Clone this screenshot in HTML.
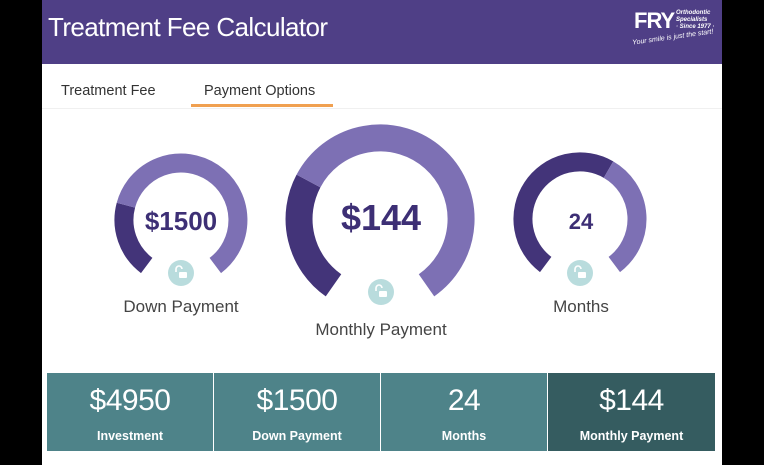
<!DOCTYPE html>
<html><head><meta charset="utf-8"><style>
*{margin:0;padding:0;box-sizing:border-box}
body{width:764px;height:465px;background:#000;position:relative;overflow:hidden;font-family:"Liberation Sans",sans-serif}
#w{position:absolute;left:42px;top:0;width:680px;height:465px;background:#fff}
#h{position:absolute;left:0;top:0;width:680px;height:64px;background:#4f3f86}
#h .t{position:absolute;left:6px;top:12px;color:#fff;font-size:26px;font-weight:300;letter-spacing:-0.6px}
.tab{position:absolute;top:83px;font-size:14.5px;color:#333}
#ul{position:absolute;left:149px;top:104px;width:142px;height:3px;background:#f0a050}
#ln{position:absolute;left:0;top:108px;width:680px;height:1px;background:#f0f0f0}
.lbl{position:absolute;font-size:17px;color:#444;text-align:center;width:200px}
.box{position:absolute;top:373px;height:78px;width:166px;background:#4e8389;color:#fff;text-align:center}
.box .n{font-size:30px;font-weight:300;margin-top:9px;line-height:38px;letter-spacing:-0.5px}
.box .l{font-size:12.5px;font-weight:bold;margin-top:9px}
</style></head><body>
<div id="w">
<div id="h"><div class="t">Treatment Fee Calculator</div>
<div style="position:absolute;left:592px;top:8px;color:#fff;font-weight:bold;font-size:22px;letter-spacing:-1px">FRY</div>
<div style="position:absolute;left:634px;top:10px;color:#fff;font-size:6px;line-height:7px;font-weight:bold;font-style:italic">Orthodontic<br>Specialists<br>· Since 1977 ·</div>
<div style="position:absolute;left:590px;top:34px;color:#fff;font-size:7px;font-style:italic;transform:rotate(-8deg)">Your smile is just the start!</div>
</div>
<div class="tab" style="left:19px">Treatment Fee</div>
<div class="tab" style="left:162px">Payment Options</div>
<div id="ul"></div><div id="ln"></div>
</div>
<svg style="position:absolute;left:0;top:0" width="764" height="465">
<g fill="none">
<path d="M146.7 265.5 A57 57 0 0 1 125.9 205.2" stroke="#433479" stroke-width="19"/>
<path d="M125.9 205.2 A57 57 0 1 1 215.3 265.5" stroke="#7d70b4" stroke-width="19"/>
<path d="M333.5 285.3 A81 81 0 0 1 308.5 181" stroke="#433479" stroke-width="27"/>
<path d="M308.5 181 A81 81 0 1 1 426.5 285.3" stroke="#7d70b4" stroke-width="27"/>
<path d="M545.7 264.5 A57 57 0 0 1 608.5 169.6" stroke="#433479" stroke-width="19"/>
<path d="M608.5 169.6 A57 57 0 0 1 614.3 264.5" stroke="#7d70b4" stroke-width="19"/>
</g>
<g>
<circle cx="181" cy="273" r="13" fill="#b9dcdd"/>
<circle cx="381" cy="292" r="13" fill="#b9dcdd"/>
<circle cx="580" cy="273" r="13" fill="#b9dcdd"/>
</g>
<g fill="none" stroke="#fff" stroke-width="1.6">
<path d="M176 272 v-3 a3 3 0 0 1 6 0"/><path d="M376 291 v-3 a3 3 0 0 1 6 0"/><path d="M575 272 v-3 a3 3 0 0 1 6 0"/>
</g>
<g fill="#fff"><rect x="179" y="272" width="8" height="6" rx="1"/><rect x="379" y="291" width="8" height="6" rx="1"/><rect x="578" y="272" width="8" height="6" rx="1"/></g>
<g fill="#3d2f75" font-family="Liberation Sans,sans-serif" font-weight="bold" text-anchor="middle">
<text x="181" y="230" font-size="26">$1500</text>
<text x="381" y="230" font-size="36">$144</text>
<text x="581" y="229" font-size="22">24</text>
</g>
</svg>
<div class="lbl" style="left:81px;top:297px">Down Payment</div>
<div class="lbl" style="left:281px;top:320px">Monthly Payment</div>
<div class="lbl" style="left:481px;top:297px">Months</div>
<div class="box" style="left:47px"><div class="n">$4950</div><div class="l">Investment</div></div>
<div class="box" style="left:214px"><div class="n">$1500</div><div class="l">Down Payment</div></div>
<div class="box" style="left:381px"><div class="n">24</div><div class="l">Months</div></div>
<div class="box" style="left:548px;width:167px;background:#355c60"><div class="n">$144</div><div class="l">Monthly Payment</div></div>
</body></html>
